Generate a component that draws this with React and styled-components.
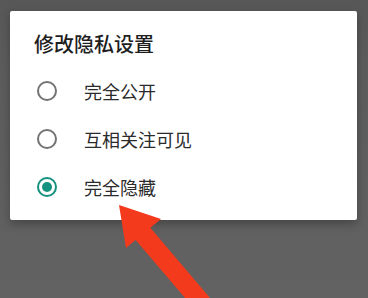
import React, { useState } from "react";
import styled, { createGlobalStyle } from "styled-components";

const Global = createGlobalStyle`
  html, body { margin: 0; padding: 0; background: #606060; }
  body { font-family: "Noto Sans CJK SC", "Noto Sans", sans-serif; }
`;

const Page = styled.div`
  position: relative;
  width: 368px;
  height: 298px;
  overflow: hidden;
  background: linear-gradient(#575757 0px, #5c5c5c 60px, #626262 298px);
  padding: 11px 11px 0 10px;
  box-sizing: border-box;
`;

const Dialog = styled.div`
  width: 347px;
  height: 209px;
  background: #fff;
  border-radius: 2px;
  box-shadow: 0 4px 10px rgba(0, 0, 0, 0.28);
  box-sizing: border-box;
  padding: 21px 0 9px 0;
  display: flex;
  flex-direction: column;
`;

const Title = styled.div`
  font-size: 20px;
  line-height: 24px;
  color: #1e1e1e;
  font-weight: 500;
  padding-left: 24px;
  margin-bottom: 11px;
`;

const Option = styled.label`
  height: 48px;
  display: flex;
  align-items: center;
  padding-left: 27px;
  cursor: pointer;
`;

const Ring = styled.span`
  width: 20px;
  height: 20px;
  box-sizing: border-box;
  border-radius: 50%;
  border: 2px solid ${(p) => (p.$on ? "#15917f" : "#737373")};
  display: flex;
  align-items: center;
  justify-content: center;
  margin-right: 27px;
  flex-shrink: 0;
`;

const Dot = styled.span`
  width: 10px;
  height: 10px;
  border-radius: 50%;
  background: #15917f;
`;

const Label = styled.span`
  font-size: 18px;
  line-height: 24px;
  color: #2b2b2b;
`;

const Arrow = styled.svg`
  position: absolute;
  left: 0;
  top: 0;
  pointer-events: none;
`;

const options = ["完全公开", "互相关注可见", "完全隐藏"];

export default function App() {
  const [sel, setSel] = useState(2);
  return (
    <>
      <Global />
      <Page>
        <Dialog>
          <Title>修改隐私设置</Title>
          {options.map((o, i) => (
            <Option key={o} onClick={() => setSel(i)}>
              <Ring $on={sel === i}>{sel === i && <Dot />}</Ring>
              <Label>{o}</Label>
            </Option>
          ))}
        </Dialog>
        <Arrow width="368" height="298" viewBox="0 0 368 298">
          <line x1="138" y1="228" x2="212" y2="315" stroke="#f43a1c" strokeWidth="19" />
          <polygon points="119,205 161,219 126,248" fill="#f43a1c" />
        </Arrow>
      </Page>
    </>
  );
}
